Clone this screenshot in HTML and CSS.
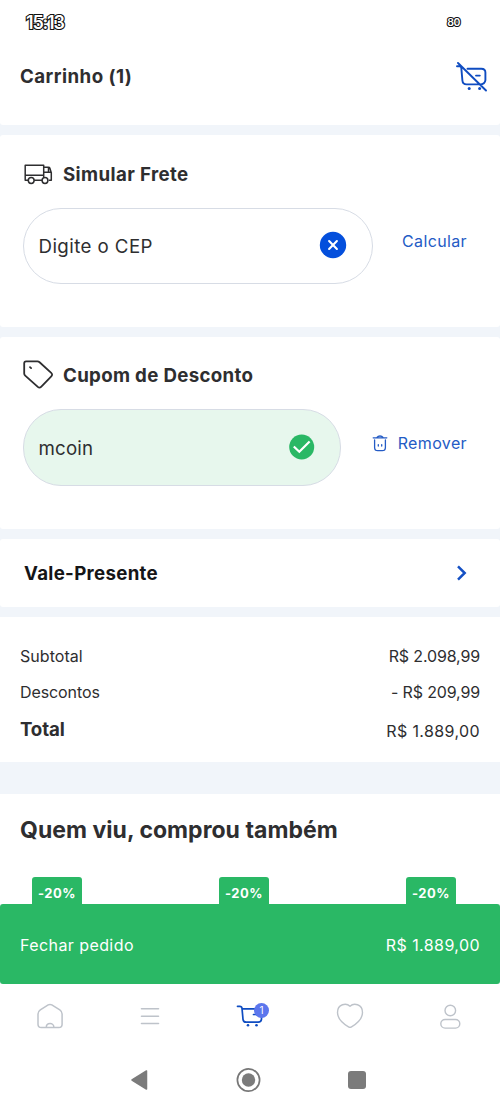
FILE: index.html
```html
<!DOCTYPE html>
<html lang="pt-BR">
<head>
<meta charset="utf-8">
<title>Carrinho</title>
<link rel="stylesheet" href="styles.css">
</head>
<body>
<div class="screen">
  <header class="header">
    <div class="status"><span class="clock">15:13</span><span class="battery">80</span></div>
    <div class="titlebar">
      <h1 class="heading title">Carrinho (1)</h1>
      <svg class="icon blue" width="32" height="32" viewBox="0 0 32 32" stroke-width="1.9">
        <path d="M2 5.3h2.600c1 0 1.600.5 1.700 1.600L7.400 19.500c.2 2.700 1.600 3.900 4.200 3.900h13.500c3.300 0 5-1.500 5.300-4.200V11.600c0-2.400-1.500-3.800-4.100-3.800H12.500M21 14.600h3.800M3 2l28 27.500"/>
        <circle class="dot" cx="14.200" cy="27.500" r="1.500"/><circle class="dot" cx="24.600" cy="27.500" r="1.500"/>
      </svg>
    </div>
  </header>

  <section class="card form-card">
    <div class="card-head">
      <svg class="icon dark" width="32" height="32" viewBox="0 0 32 32" stroke-width="1.500">
        <path d="M6 23.300H3.200V8.300h18.500v15H11.500M3.200 18.300h18.500M21.700 10.200h4.800q1 0 1.300.9l1.500 4.700v7.500h-2M21.700 15.300h6.800M26.500 11v4"/>
        <circle cx="9.200" cy="23.500" r="2.900" fill="#fff"/><circle cx="23" cy="23.500" r="2.900" fill="#fff"/>
      </svg>
      <h2 class="heading freight">Simular Frete</h2>
    </div>
    <div class="form-row">
      <div class="field freight-field"><span class="cep">Digite o CEP</span>
        <svg class="clear" width="28" height="28" viewBox="0 0 28 28"><circle cx="14" cy="14" r="13.200" fill="#044fdc"/><path d="M10.100 10.100l7.800 7.800M17.900 10.100l-7.800 7.800" stroke="#fff" stroke-width="2.100" stroke-linecap="round"/></svg>
      </div>
      <a class="action calc">Calcular</a>
    </div>
  </section>

  <section class="card form-card">
    <div class="card-head">
      <svg class="icon dark" width="32" height="32" viewBox="0 0 32 32" stroke-width="1.800">
        <path d="M4.100 2.300h11.400c.7 0 1.300.2 1.800.7L29.200 13.900c1.200 1.100 1.200 2.300.1 3.400L19.100 27.800c-1.100 1.100-2.100 1.100-3.300 0L3.200 16.600c-.7-.6-1-1.300-1-2.100V4.300c0-1.200.7-2 1.900-2z"/><path d="M8 8.100l1.100 1"/>
      </svg>
      <h2 class="heading coupon">Cupom de Desconto</h2>
    </div>
    <div class="form-row coupon-row">
      <div class="field coupon-field"><span class="code">mcoin</span>
        <svg class="check" width="26" height="26" viewBox="0 0 26 26"><circle cx="12.700" cy="13" r="12.500" fill="#2ab865"/><path d="M4.800 12.500l5.500 5.300L20.600 7.400" fill="none" stroke="#fff" stroke-width="2.200"/></svg>
      </div>
      <a class="action remove">
        <svg class="icon" width="16" height="18" viewBox="0 0 16 18" stroke="#245bc5" stroke-width="1.300"><path d="M1.200 3.800h13.600M5 3.400Q6 2 8 2t3 1.400M2.600 6v7.400q0 3.200 3.200 3.200h4.400q3.200 0 3.200-3.200V6M6.300 10.600v1.500M9.700 10.600v1.500"/></svg>
        <span class="remove-text">Remover</span>
      </a>
    </div>
  </section>

  <section class="card gift">
    <h2 class="heading gift-title">Vale-Presente</h2>
    <svg class="icon" width="12" height="16" viewBox="0 0 12 16" stroke="#1450c4" stroke-width="2.500"><path class="square" d="M2 1.400L8.700 8 2 14.600"/></svg>
  </section>

  <section class="summary">
    <div class="line"><span class="sub">Subtotal</span><span class="money m1">R$ 2.098,99</span></div>
    <div class="line discount"><span class="desc">Descontos</span><span class="money m2">- R$ 209,99</span></div>
    <div class="line total"><strong>Total</strong><span class="money m3">R$ 1.889,00</span></div>
  </section>

  <section class="related">
    <h2 class="related-title">Quem viu, comprou também</h2>
    <div class="badges"><span class="badge">-20%</span><span class="badge">-20%</span><span class="badge">-20%</span></div>
  </section>

  <div class="checkout"><span class="close-order">Fechar pedido</span><span class="checkout-total">R$ 1.889,00</span></div>

  <nav class="tabs">
    <svg class="icon gray" width="28" height="28" viewBox="0 0 28 28" stroke-width="1.500"><path d="M15.800 2.900l8 5q2.300 1.600 2.300 4.200v10.200q0 3.300-3.300 3.300H5.300q-3.300 0-3.300-3.300V12.100q0-2.600 2.300-4.200l7.900-5q1.800-1 3.600 0zM10.300 25.300c0-5 7.600-5 7.600 0"/></svg>
    <svg class="icon gray" width="28" height="28" viewBox="0 0 28 28" stroke-width="1.600"><path d="M5.500 6.800h17M5.500 14.200h17M5.500 21.500h17"/></svg>
    <div class="cart">
      <svg class="icon blue" width="28" height="28" viewBox="0 0 28 28" stroke-width="1.700"><path d="M1.500 4.300h2.300q2 0 2.200 2l1 11q.3 2.900 3.200 2.900h12q3 0 3.300-3V6.800H6.300M17.500 12.500h5"/><circle class="dot" cx="12" cy="23.300" r="1.300"/><circle class="dot" cx="20.500" cy="23.300" r="1.300"/></svg>
      <span class="count">1</span>
    </div>
    <svg class="icon gray" width="28" height="28" viewBox="0 0 28 28" stroke-width="1.400"><path d="M14 4.300C17.500.8 26.500 1.600 26.500 10.500c0 7.500-7 12-11 14.400q-1.500.9-3 0c-4-2.400-11-6.900-11-14.400C1.500 1.600 10.500.8 14 4.300z"/></svg>
    <svg class="icon gray" width="28" height="28" viewBox="0 0 28 28" stroke-width="1.400"><circle cx="14.300" cy="8.500" r="5.300"/><rect x="4.800" y="17.500" width="19" height="8.600" rx="4.300"/></svg>
  </nav>

  <div class="system">
    <svg width="20" height="26" viewBox="0 0 20 26"><path d="M3 13l14.500-9v18z" fill="#7b7b7b" stroke="#7b7b7b" stroke-width="1.500" stroke-linejoin="round"/></svg>
    <svg width="26" height="26" viewBox="0 0 26 26"><circle cx="12.500" cy="13" r="11.100" fill="none" stroke="#777" stroke-width="1.700"/><circle cx="12.500" cy="13" r="6.700" fill="#7b7b7b"/></svg>
    <span class="recent"></span>
  </div>
</div>
</body>
</html>
```
FILE: styles.css
```css
* { box-sizing: border-box; }
body { margin: 0; font-family: Inter, "Liberation Sans", sans-serif; color: #2e2e30; background: #fff; }
.screen { width: 500px; height: 1111px; display: flex; flex-direction: column; overflow: hidden; background: #f1f5fa; }
svg { display: block; flex: none; }
.icon { fill: none; stroke-linecap: round; stroke-linejoin: round; }
.icon.blue { stroke: #0f4cc1; }
.icon.dark { stroke: #2e2e30; }
.icon.gray { stroke: #bec3ca; }
.icon .dot { fill: #0f4cc1; stroke: none; }
.square { stroke-linecap: butt; stroke-linejoin: miter; }
.heading { margin: 0; font-size: 18.7px; line-height: 24px; font-weight: 700; letter-spacing: .38px; white-space: nowrap; }

.header { height: 125px; background: #fff; border-radius: 0 0 3px 3px; }
.status { height: 45px; padding: 0 40px 0 26px; display: flex; justify-content: space-between; align-items: center; font-weight: 600; color: #fff; -webkit-text-stroke: 2.200px #111; paint-order: stroke fill; }
.clock { font-size: 18px; letter-spacing: -1.200px; }
.battery { font-size: 10.500px; letter-spacing: -.4px; }
.titlebar { height: 63px; padding: 0 13px 0 20px; display: flex; align-items: center; justify-content: space-between; }
.title { padding-top: 1px; letter-spacing: .45px; }

.card { margin-top: 10px; background: #fff; border-radius: 3px; }
.form-card { height: 192px; padding: 22px 33px 0 22px; }
.card-head { height: 32px; display: flex; align-items: center; gap: 9px; }
.freight { padding-top: 3px; }
.coupon { padding-top: 1px; letter-spacing: .32px; }
.form-row { margin: 19px 0 0 1px; display: flex; justify-content: space-between; align-items: flex-start; }
.coupon-row { margin-top: 18px; }
.field { height: 76px; display: flex; align-items: center; justify-content: space-between; padding: 0 25px 0 14.500px; border: 1px solid #d7dce5; border-radius: 38px; font-size: 18.7px; line-height: 24px; font-weight: 370; }
.freight-field { width: 350px; }
.cep { padding-top: 1px; letter-spacing: .42px; }
.code { padding-top: 2px; letter-spacing: .2px; }
.clear { margin-top: -2px; }
.coupon-field { width: 318px; height: 77px; background: #e7f7ed; }
.check { margin-top: -1px; }
.action { font-size: 16px; line-height: 24px; letter-spacing: .37px; color: #245bc5; margin-top: 21px; }
.remove { display: flex; align-items: center; gap: 10px; margin-top: 22px; }
.gift { height: 68px; padding: 0 32px 0 24px; display: flex; align-items: center; justify-content: space-between; }
.gift-title { padding-top: 1px; color: #151517; letter-spacing: .3px; }

.summary { height: 145px; margin-top: 10px; padding: 27px 20px 0; background: #fff; font-size: 16px; line-height: 24px; font-weight: 370; }
.line { display: flex; justify-content: space-between; }
.sub { letter-spacing: .05px; }
.desc { letter-spacing: -.1px; }
.m1, .m2 { letter-spacing: -.15px; }
.m3 { letter-spacing: .38px; }
.discount { margin-top: 12px; }
.total { margin-top: 13px; }
.total strong { font-size: 18.700px; letter-spacing: -.15px; padding-top: 1px; }
.total .money { padding-top: 2px; }

.related { height: 110px; margin-top: 32px; padding: 21px 0 0; background: #fff; }
.related-title { margin: 0 20px; font-size: 23px; line-height: 30px; font-weight: 700; letter-spacing: .03px; }
.badges { margin: 32px 44px 0 32px; display: flex; justify-content: space-between; }
.badge { width: 50px; height: 27px; padding-top: 4px; border-radius: 3px 3px 0 0; background: #2ab865; color: #fff; text-align: center; font-size: 13px; line-height: 24px; font-weight: 700; letter-spacing: .5px; }
.checkout { height: 80px; padding: 2px 20px 0; display: flex; align-items: center; justify-content: space-between; background: #2ab865; border-radius: 3px; color: #fff; font-size: 16px; font-weight: 370; letter-spacing: .42px; }
.related, .checkout { flex: none; }
.tabs { height: 64px; padding: 0 36px; display: flex; align-items: center; justify-content: space-between; background: #fff; }
.cart { position: relative; }
.count { position: absolute; left: 18px; top: 1px; width: 15px; height: 15px; border-radius: 50%; background: #5c76ed; color: #fff; font-size: 10px; line-height: 15px; text-align: center; }
.system { height: 63px; flex: none; padding: 1px 134px 0 129px; display: flex; align-items: center; justify-content: space-between; background: #fff; }
.recent { width: 18px; height: 18px; border-radius: 3px; background: #7b7b7b; }
```
